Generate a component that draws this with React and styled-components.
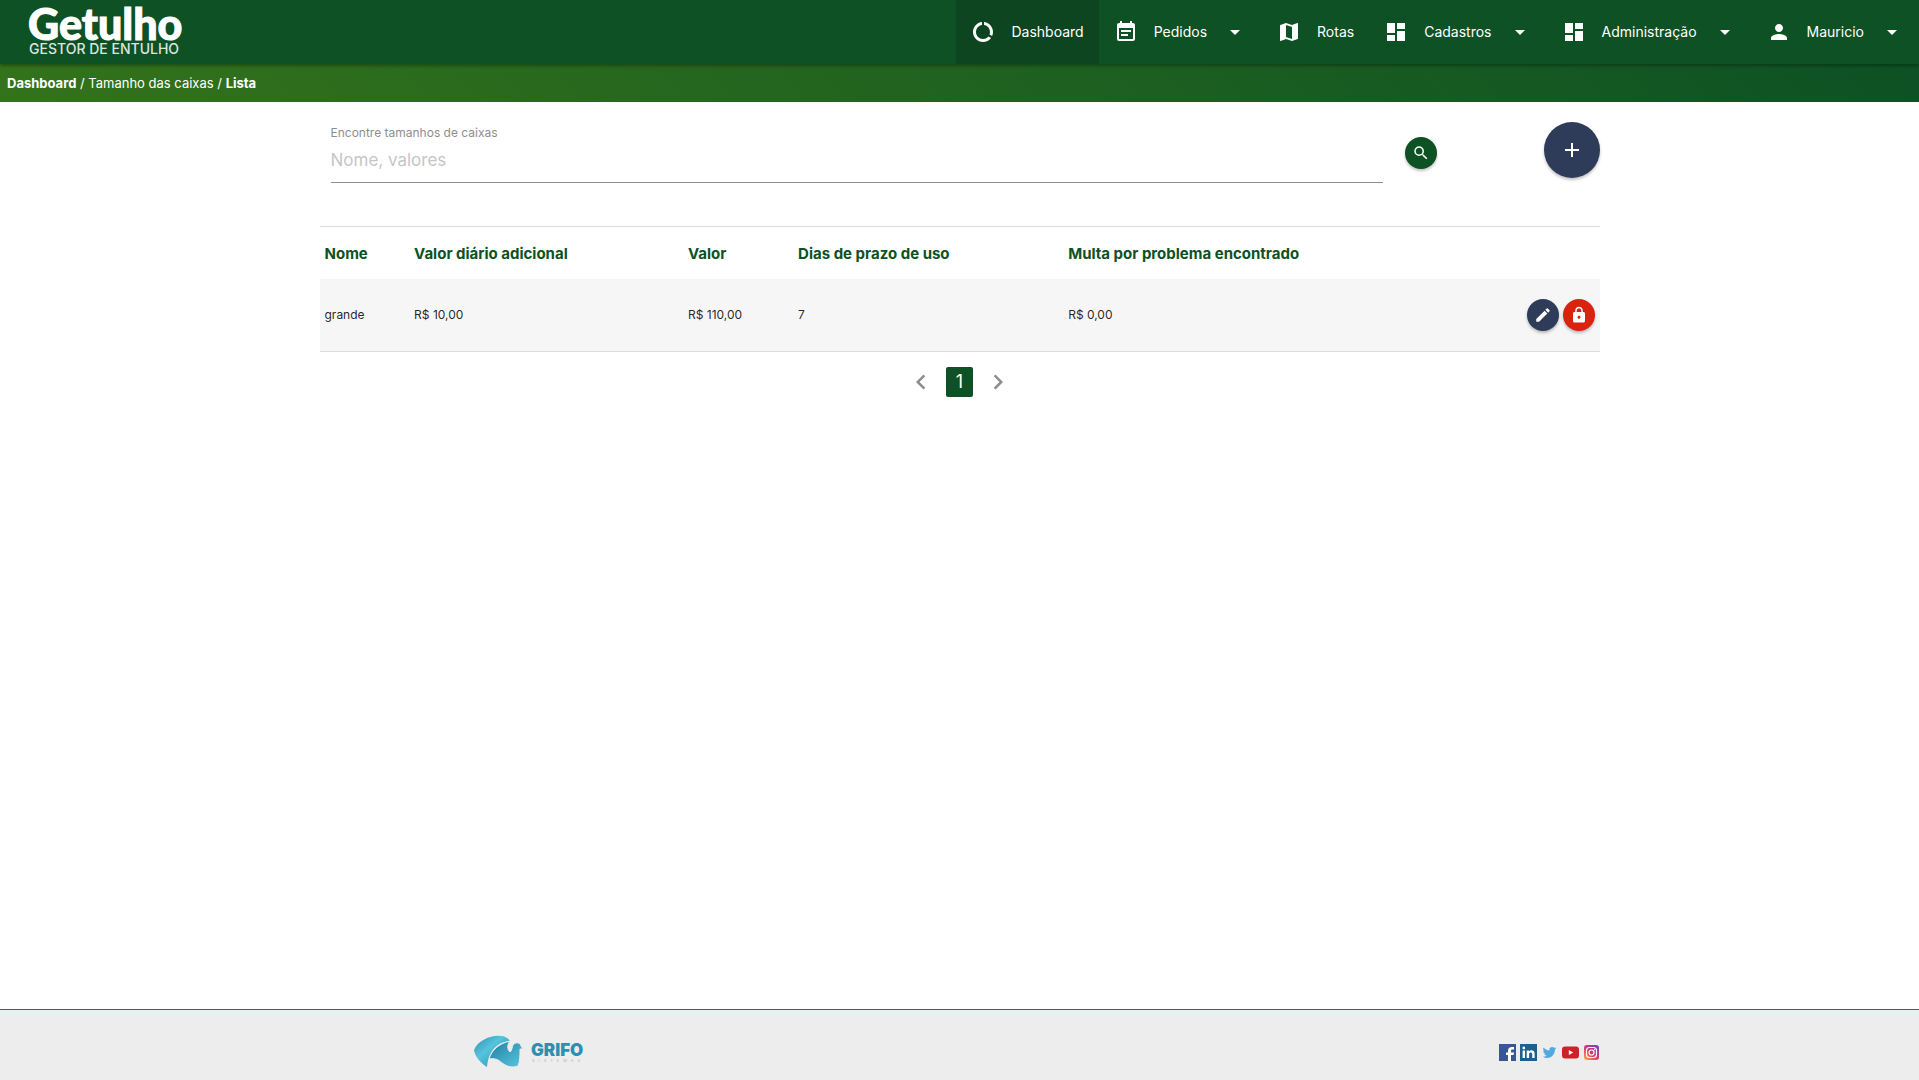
import { useState } from "react";
import styled, { createGlobalStyle } from "styled-components";
import {
  MdAdd,
  MdArrowDropDown,
  MdChevronLeft,
  MdChevronRight,
  MdDashboard,
  MdDataUsage,
  MdEventNote,
  MdLock,
  MdMap,
  MdModeEdit,
  MdPerson,
  MdSearch,
} from "react-icons/md";

const green = "#0d5124";
const darkGreen = "#0c4520";
const lightGreen = "#33731b";
const navy = "#2e3b59";
const red = "#d9230f";
const lineGrey = "#dcdcdc";
const midGrey = "#8e8e8e";

const GlobalStyle = createGlobalStyle`
  *, *::before, *::after {
    box-sizing: border-box;
  }

  body {
    margin: 0;
    background: #fff;
    color: rgba(0, 0, 0, 0.87);
    font-family: Inter, "Liberation Sans", sans-serif;
    font-size: 15px;
    line-height: 22px;
  }

  a {
    color: inherit;
    text-decoration: none;
  }

  button {
    font: inherit;
    cursor: pointer;
  }
`;

const Page = styled.div`
  display: flex;
  flex-direction: column;
  min-height: 100vh;
`;

const Navbar = styled.header`
  position: relative;
  display: flex;
  justify-content: space-between;
  align-items: stretch;
  height: 64px;
  color: #fff;
  background: ${green};
  box-shadow: 0 2px 3px rgba(0, 0, 0, 0.3);
`;

const Brand = styled.a`
  padding-left: 28px;

  svg {
    display: block;
  }
`;

const NavList = styled.ul`
  display: flex;
  margin: 0;
  padding: 0;
  list-style: none;
`;

const NavLink = styled.a`
  display: flex;
  align-items: center;
  gap: 16px;
  height: 100%;
  padding: 0 15px;
  font-size: 14px;
  background: ${({ $active }) => ($active ? darkGreen : "transparent")};

  &:hover {
    background: ${darkGreen};
  }
`;

const Breadcrumb = styled.nav`
  padding: 8px 7px;
  color: #fff;
  font-size: 13px;
  background: linear-gradient(45deg, ${lightGreen}, ${green});
`;

const Crumb = styled.a`
  font-weight: ${({ $strong }) => ($strong ? 700 : 400)};
`;

const Container = styled.main`
  flex: 1;
  width: 70%;
  max-width: 1280px;
  margin: 0 auto;
`;

const SearchForm = styled.form`
  display: flex;
  align-items: flex-start;
  padding: 20px 0 0 11px;
`;

const Field = styled.div`
  flex: 1;
  display: flex;
  flex-direction: column;
`;

const Label = styled.label`
  color: ${midGrey};
  font-size: 12px;
`;

const SearchInput = styled.input`
  width: 100%;
  height: 39px;
  padding: 0 0 6px;
  border: 0;
  border-bottom: 1px solid ${midGrey};
  outline: none;
  background: transparent;
  font: inherit;
  font-size: 17px;

  &::placeholder {
    color: #c6c6c6;
  }

  &:focus {
    border-bottom-color: ${green};
  }
`;

const RoundButton = styled.button`
  display: inline-flex;
  align-items: center;
  justify-content: center;
  flex-shrink: 0;
  width: ${({ $large }) => ($large ? "56px" : "32px")};
  height: ${({ $large }) => ($large ? "56px" : "32px")};
  padding: 0;
  border: 0;
  border-radius: 50%;
  color: #fff;
  background: ${({ $color }) => $color};
  box-shadow: 0 2px 3px rgba(0, 0, 0, 0.25);
`;

const SearchAction = styled.div`
  padding: 15px 107px 0 22px;
`;

const Table = styled.table`
  width: 100%;
  margin-top: 43px;
  border-collapse: collapse;
  border-top: 1px solid ${lineGrey};
  border-bottom: 1px solid ${lineGrey};
`;

const HeadCell = styled.th`
  width: ${({ $width }) => $width};
  padding: 16px 5px 14px;
  color: ${green};
  font-weight: 700;
  text-align: left;
`;

const Cell = styled.td`
  height: 72px;
  padding: 0 5px;
  font-size: 12px;
  background: #f6f6f6;
`;

const Actions = styled.div`
  display: flex;
  justify-content: flex-end;
  gap: 4px;
`;

const Pagination = styled.nav`
  display: flex;
  justify-content: center;
  align-items: center;
  gap: 10px;
  margin-top: 15px;
`;

const PageArrow = styled.button`
  display: flex;
  padding: 0;
  border: 0;
  color: #8c8c8c;
  background: transparent;
`;

const PageNumber = styled.button`
  height: 30px;
  padding: 0 10px;
  border: 0;
  border-radius: 2px;
  color: #fff;
  font-size: 18px;
  background: ${green};
`;

const Footer = styled.footer`
  border-top: 1px solid ${lightGreen};
  background: #ededed;
`;

const FooterInner = styled.div`
  display: flex;
  justify-content: space-between;
  align-items: center;
  width: 70%;
  max-width: 1280px;
  height: 70px;
  margin: 0 auto;
  padding: 14px 0 0 154px;

  svg {
    display: block;
  }
`;

const SocialLinks = styled.div`
  display: flex;
  gap: 4px;
`;

const navItems = [
  { label: "Dashboard", Icon: MdDataUsage, active: true },
  { label: "Pedidos", Icon: MdEventNote, menu: true },
  { label: "Rotas", Icon: MdMap },
  { label: "Cadastros", Icon: MdDashboard, menu: true },
  { label: "Administração", Icon: MdDashboard, menu: true },
  { label: "Mauricio", Icon: MdPerson, menu: true },
];

const columns = [
  { key: "name", title: "Nome", width: "7%" },
  { key: "daily", title: "Valor diário adicional", width: "21.4%" },
  { key: "value", title: "Valor", width: "8.6%" },
  { key: "days", title: "Dias de prazo de uso", width: "21.1%" },
  { key: "fine", title: "Multa por problema encontrado", width: "30%" },
];

const sizes = [{ id: 1, name: "grande", daily: "R$ 10,00", value: "R$ 110,00", days: "7", fine: "R$ 0,00" }];

function GetulhoLogo() {
  return (
    <svg width="164" height="64" viewBox="0 0 164 64" fill="#fff">
      <text x="0" y="40" fontFamily="Lato, sans-serif" fontSize="43" fontWeight="900" stroke="#fff">Getulho</text>
      <text x="1" y="54" fontFamily="Inter, sans-serif" fontSize="14" fontWeight="500" opacity="0.85">
        GESTOR DE ENTULHO
      </text>
    </svg>
  );
}

function GrifoLogo() {
  return (
    <svg width="114" height="34" viewBox="0 0 114 34">
      <defs>
        <linearGradient id="wing" x1="0" y1="0" x2="1" y2="1">
          <stop offset="0" stopColor="#2a8fae" />
          <stop offset="0.4" stopColor="#58c3dd" />
          <stop offset="1" stopColor="#1d87a8" />
        </linearGradient>
        <linearGradient id="body" x1="0" y1="0" x2="1" y2="1">
          <stop offset="0" stopColor="#1d7fa2" />
          <stop offset="1" stopColor="#5cc6e0" />
        </linearGradient>
      </defs>
      <path d="M0 15C4 5 18 0 26 1c5 0 8 2 10 5C24 7 15 14 13 32 7 28 1 22 0 15Z" fill="url(#wing)" />
      <path
        d="M15 24C18 15 24 9 36 6c-3 4-3 8 0 11 2-1 2-5 3-7 2-3 7-3 8 1l2 3-3 0c0 6 0 13-2 17-6 2-10 1-16-3-4-4-8-5-13-4Z"
        fill="url(#body)"
        stroke="#ededed"
      />
      <text x="57" y="21" fontFamily="Inter, sans-serif" fontSize="17" fontWeight="900" fill="#2c8fb3">GRIFO</text>
      <text x="58" y="27" fontFamily="Inter, sans-serif" fontSize="4" letterSpacing="4" fill="#a9b8bf">SISTEMAS</text>
    </svg>
  );
}

function FacebookIcon() {
  return (
    <svg width="17" height="17" viewBox="0 0 17 17">
      <rect width="17" height="17" fill="#38559a" />
      <path d="M9 17v-6H7V8.500h2V7c0-2.500 1.500-4 4-4h2v2.500h-1.500C12.300 5.500 12 6 12 7v1.500h3L14.500 11H12v6Z" fill="#fff" />
    </svg>
  );
}

function LinkedinIcon() {
  return (
    <svg width="17" height="17" viewBox="0 0 17 17">
      <rect width="17" height="17" fill="#1f5f8b" />
      <circle cx="3.800" cy="4" r="1.400" fill="#fff" />
      <path d="M2.600 6.500H5V14H2.600ZM6.700 6.500H9v1c1.500-2 5.600-1.600 5.600 2V14h-2.400v-4c0-2-3.100-2-3.100 0v4H6.700Z" fill="#fff" />
    </svg>
  );
}

function TwitterIcon() {
  return (
    <svg width="17" height="17" viewBox="-3 -3 30 30">
      <path
        d="M23.950 4.570a10 10 0 0 1-2.820.77 4.960 4.960 0 0 0 2.160-2.720 9.900 9.900 0 0 1-3.120 1.190 4.920 4.920 0 0 0-8.380 4.480C7.690 8.090 4.070 6.130 1.640 3.160a4.920 4.920 0 0 0 1.520 6.570 4.900 4.900 0 0 1-2.230-.61v.06a4.920 4.920 0 0 0 3.950 4.830 5 5 0 0 1-2.210.08 4.940 4.940 0 0 0 4.600 3.420A9.870 9.870 0 0 1 0 19.540a14 14 0 0 0 7.550 2.210c9.050 0 14-7.500 14-13.980l-.02-.64a9.900 9.900 0 0 0 2.420-2.560Z"
        fill="#4fa9e2"
      />
    </svg>
  );
}

function YoutubeIcon() {
  return (
    <svg width="17" height="17" viewBox="0 0 17 17">
      <rect y="2.500" width="17" height="12" rx="3" fill="#cf2027" />
      <path d="M6.800 6v5l4.400-2.500Z" fill="#fff" />
    </svg>
  );
}

function InstagramIcon() {
  return (
    <svg width="17" height="17" viewBox="0 0 17 17">
      <defs>
        <linearGradient id="insta" x1="0" y1="1" x2="0.8" y2="0">
          <stop offset="0" stopColor="#f9b14b" />
          <stop offset="0.5" stopColor="#dc3a6b" />
          <stop offset="1" stopColor="#7b3fb5" />
        </linearGradient>
      </defs>
      <rect x="1" y="1" width="15" height="15" rx="3" fill="url(#insta)" />
      <g fill="none" stroke="#fff" strokeWidth="1.200">
        <rect x="3.500" y="3.500" width="10" height="10" rx="3" />
        <circle cx="8.500" cy="8.500" r="2.500" />
      </g>
      <circle cx="11.500" cy="5.500" r="0.700" fill="#fff" />
    </svg>
  );
}

const socials = [
  { name: "Facebook", Icon: FacebookIcon },
  { name: "LinkedIn", Icon: LinkedinIcon },
  { name: "Twitter", Icon: TwitterIcon },
  { name: "YouTube", Icon: YoutubeIcon },
  { name: "Instagram", Icon: InstagramIcon },
];

export default function App() {
  const [query, setQuery] = useState("");

  return (
    <Page>
      <GlobalStyle />
      <Navbar>
        <Brand href="#" aria-label="Getulho">
          <GetulhoLogo />
        </Brand>
        <NavList>
          {navItems.map(({ label, Icon, active, menu }) => (
            <li key={label}>
              <NavLink href="#" $active={active}>
                <Icon size={24} />
                {label}
                {menu && <MdArrowDropDown size={24} />}
              </NavLink>
            </li>
          ))}
        </NavList>
      </Navbar>
      <Breadcrumb>
        <Crumb href="#" $strong>Dashboard</Crumb> / <Crumb href="#">Tamanho das caixas</Crumb> /{" "}
        <Crumb href="#" $strong>Lista</Crumb>
      </Breadcrumb>
      <Container>
        <SearchForm onSubmit={(e) => e.preventDefault()}>
          <Field>
            <Label htmlFor="search">Encontre tamanhos de caixas</Label>
            <SearchInput
              id="search"
              placeholder="Nome, valores"
              value={query}
              onChange={(e) => setQuery(e.target.value)}
            />
          </Field>
          <SearchAction>
            <RoundButton type="submit" $color={green} aria-label="Buscar">
              <MdSearch size={18} />
            </RoundButton>
          </SearchAction>
          <RoundButton type="button" $large $color={navy} aria-label="Adicionar">
            <MdAdd size={24} />
          </RoundButton>
        </SearchForm>
        <Table>
          <thead>
            <tr>
              {columns.map(({ key, title, width }) => (
                <HeadCell key={key} $width={width}>{title}</HeadCell>
              ))}
              <HeadCell aria-label="Ações" />
            </tr>
          </thead>
          <tbody>
            {sizes.map((size) => (
              <tr key={size.id}>
                {columns.map(({ key }) => (
                  <Cell key={key}>{size[key]}</Cell>
                ))}
                <Cell>
                  <Actions>
                    <RoundButton type="button" $color={navy} aria-label="Editar">
                      <MdModeEdit size={18} />
                    </RoundButton>
                    <RoundButton type="button" $color={red} aria-label="Bloquear">
                      <MdLock size={18} />
                    </RoundButton>
                  </Actions>
                </Cell>
              </tr>
            ))}
          </tbody>
        </Table>
        <Pagination>
          <PageArrow type="button" aria-label="Anterior">
            <MdChevronLeft size={30} />
          </PageArrow>
          <PageNumber type="button">1</PageNumber>
          <PageArrow type="button" aria-label="Próxima">
            <MdChevronRight size={30} />
          </PageArrow>
        </Pagination>
      </Container>
      <Footer>
        <FooterInner>
          <a href="#" aria-label="Grifo Sistemas">
            <GrifoLogo />
          </a>
          <SocialLinks>
            {socials.map(({ name, Icon }) => (
              <a key={name} href="#" aria-label={name}>
                <Icon />
              </a>
            ))}
          </SocialLinks>
        </FooterInner>
      </Footer>
    </Page>
  );
}
